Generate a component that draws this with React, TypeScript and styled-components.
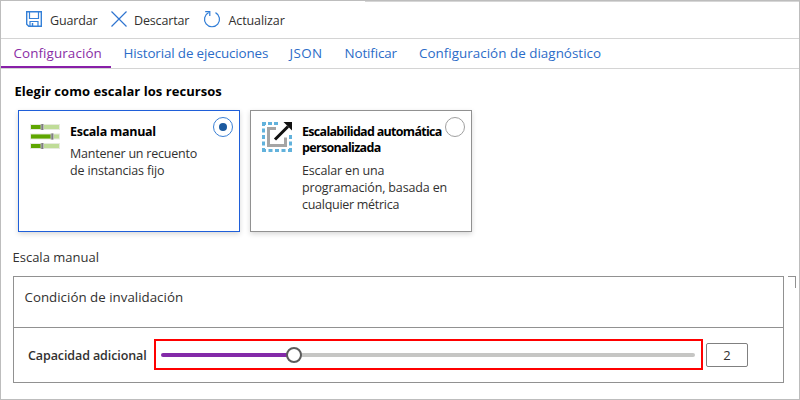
import React from "react";
import styled, { createGlobalStyle } from "styled-components";

const Global = createGlobalStyle`
  * { box-sizing: border-box; }
  body { margin: 0; background: #fff; font-family: "Open Sans", "Noto Sans", sans-serif; }
`;

const Frame = styled.div`
  width: 800px;
  height: 400px;
  border: 1px solid #bdbdbd;
  background: #fff;
  overflow: hidden;
  display: flex;
  flex-direction: column;
`;

const Label = styled.span<{ $size?: number; $track?: number; $weight?: number; $color?: string }>`
  display: block;
  font-size: ${(p) => p.$size ?? 13}px;
  letter-spacing: ${(p) => p.$track ?? 0}px;
  font-weight: ${(p) => p.$weight ?? 400};
  color: ${(p) => p.$color ?? "#323130"};
  white-space: nowrap;
`;

const TopRule = styled.div`
  height: 1px;
  margin-left: 364px;
  background: #d6d6d6;
  flex: none;
`;

const Toolbar = styled.div`
  height: 37px;
  flex: none;
  display: flex;
  border-bottom: 1px solid #d4d4d4;
  padding-left: 24px;
`;

const Command = styled.div<{ $width: number; $gap: number }>`
  width: ${(p) => p.$width}px;
  display: flex;
  align-items: flex-start;
  gap: ${(p) => p.$gap}px;
  padding-top: 9px;
  line-height: 20px;
  svg { flex: none; display: block; margin-top: -1px; }
`;

const Tabs = styled.div`
  height: 30px;
  flex: none;
  display: flex;
  border-bottom: 1px solid #d4d4d4;
`;

const Tab = styled.div<{ $width: number; $active?: boolean }>`
  width: ${(p) => p.$width}px;
  height: 29px;
  line-height: 28px;
  padding-left: 12.5px;
  border-bottom: ${(p) => (p.$active ? "2px solid #881fa8" : "0")};
`;

const Heading = styled.div`
  height: 41px;
  flex: none;
  padding: 12px 0 0 13.5px;
  line-height: 20px;
`;

const Cards = styled.div`
  display: flex;
  flex: none;
  gap: 10px;
  padding-left: 17px;
`;

const Card = styled.div<{ $selected?: boolean }>`
  width: 222px;
  height: 122px;
  border: 1px solid ${(p) => (p.$selected ? "#1f5fd9" : "#919191")};
  box-shadow: 0 2px 5px rgba(0, 0, 0, 0.16);
  position: relative;
  display: flex;
  padding: 11px 0 0 11px;
  svg { flex: none; display: block; }
`;

const CardText = styled.div`
  margin-left: 10px;
  padding-top: 2px;
  display: flex;
  flex-direction: column;
`;

const Title = styled.div`
  display: flex;
  flex-direction: column;
  line-height: 16px;
`;

const Description = styled.div<{ $gap: number }>`
  display: flex;
  flex-direction: column;
  line-height: 17px;
  margin-top: ${(p) => p.$gap}px;
`;

const Radio = styled.div<{ $checked?: boolean }>`
  position: absolute;
  top: 6px;
  right: 6px;
  width: 20px;
  height: 20px;
  border-radius: 50%;
  border: 1px solid ${(p) => (p.$checked ? "#3a7fd5" : "#a0a0a0")};
  background: #fff;
  display: grid;
  place-items: center;
  &::after {
    content: "";
    width: 8px;
    height: 8px;
    border-radius: 50%;
    background: ${(p) => (p.$checked ? "#1c5a9f" : "transparent")};
  }
`;

const SectionLabel = styled.div`
  height: 44px;
  flex: none;
  padding: 15px 0 0 11.5px;
  line-height: 20px;
`;

const PanelRow = styled.div`
  display: flex;
  gap: 4px;
  padding-left: 12px;
`;

const Panel = styled.div`
  width: 771px;
  height: 107px;
  border: 1px solid #919191;
`;

const PanelHead = styled.div`
  height: 51px;
  border-bottom: 1px solid #919191;
  padding: 10px 0 0 10.5px;
  line-height: 20px;
`;

const Capacity = styled.div`
  height: 54px;
  display: flex;
  align-items: flex-start;
  padding-left: 14px;
`;

const CapacityLabel = styled.div`
  width: 126px;
  margin-top: 18px;
  line-height: 20px;
`;

const SliderBox = styled.div`
  width: 549px;
  height: 31px;
  margin-top: 11px;
  border: 2px solid #f00;
  display: flex;
  align-items: center;
  padding: 1px 6px 0 5px;
`;

const Fill = styled.div`
  width: 126px;
  height: 4px;
  border-radius: 2px 0 0 2px;
  background: #832aa8;
`;

const Thumb = styled.div`
  width: 16px;
  height: 16px;
  margin: 0 -1px;
  border-radius: 50%;
  border: 2px solid #5c5c5c;
  background: #fff;
  z-index: 1;
`;

const Remaining = styled.div`
  flex: 1;
  height: 4px;
  border-radius: 0 2px 2px 0;
  background: #c6c6c4;
`;

const ValueBox = styled.div`
  width: 42px;
  height: 24px;
  margin: 15px 0 0 3px;
  border: 1px solid #808080;
  border-radius: 2px;
  display: grid;
  place-items: center;
  line-height: 22px;
`;

const Corner = styled.div`
  width: 8px;
  height: 12px;
  border-top: 1px solid #919191;
  border-right: 1px solid #919191;
`;

const SaveIcon = () => (
  <svg width="18" height="20" viewBox="0 0 18 20" fill="none" stroke="#3480d8">
    <path d="M1.700 1.700h14.600v14.600H3.800l-2.100-2.100z" strokeWidth="1.400" />
    <path d="M4.500 2v6.500h9V2M5 16v-4.500h8V16" strokeWidth="1.200" />
    <path d="M7.500 13v3" strokeWidth="1.500" />
  </svg>
);

const DiscardIcon = () => (
  <svg width="18" height="20" viewBox="0 0 18 20" fill="none" stroke="#2f74d0" strokeWidth="1.200">
    <path d="M1.500 1.500l15 15M16.500 1.500l-15 15" />
  </svg>
);

const RefreshIcon = () => (
  <svg width="18" height="20" viewBox="0 0 18 20" fill="none" stroke="#2f7cd6" strokeWidth="1.200">
    <path d="M12.500 2.600a7.500 7.500 0 1 1-6.800-.1" />
    <path d="M2.200 1.700h4.600v4.400" />
  </svg>
);

const ManualIcon = () => (
  <svg width="30" height="32" viewBox="0 0 30 32">
    {[[2, 10.5], [11.5, 20.5], [21, 10.5]].map(([y, x]) => (
      <g key={y}>
        <rect x="0" y={y} width="30" height="6" fill="#e6eadf" />
        <rect x="1" y={y + 1} width="28" height="4" fill="#bfdc98" />
        <rect x="1" y={y + 1} width={x} height="4" fill="#5ea600" />
        <rect x={x} y={y} width="3.500" height="6" fill="#bcbcbc" />
        <rect x={x + 1} y={y} width="1.400" height="6" fill="#777" />
      </g>
    ))}
  </svg>
);

const CustomIcon = () => (
  <svg width="30" height="32" viewBox="0 0 30 32" fill="none">
    <g fill="#62b2dc">
      <path d="M0 0h4v3H3v1H0zM6 0h4v3H6zM12 0h4v3h-4z" />
      <path d="M0 6.500h3v4H0zM0 13h3v4H0zM0 19.500h3v4H0zM0 26h3v1h1v3H0z" />
      <path d="M6.500 27h4v3h-4zM13 27h4v3h-4zM19.500 27h4v3h-4zM27 26h3v4h-4v-3h1zM27 13h3v4h-3zM27 19.500h3v4h-3z" />
    </g>
    <path d="M14 6.500H6.500v17h17V15.500" stroke="#a5a5a5" strokeWidth="3" />
    <path d="M13 17.500L26 4.500" stroke="#111" strokeWidth="3" />
    <path d="M21.500 0H30v8.500z" fill="#111" />
  </svg>
);

export default function App() {
  const blue = "#2b6cc8";
  return (
    <>
      <Global />
      <Frame>
        <TopRule />
        <Toolbar>
          <Command $width={85} $gap={7}><SaveIcon /><Label $size={12.5} $track={-0.15}>Guardar</Label></Command>
          <Command $width={93} $gap={6}><DiscardIcon /><Label $size={12.5} $track={-0.15}>Descartar</Label></Command>
          <Command $width={110} $gap={7.5}><RefreshIcon /><Label $size={12.5} $track={-0.1}>Actualizar</Label></Command>
        </Toolbar>
        <Tabs>
          <Tab $width={110} $active><Label $size={13.4} $track={0.1} $color="#8a2da5">Configuración</Label></Tab>
          <Tab $width={166}><Label $size={13.4} $track={-0.13} $color={blue}>Historial de ejecuciones</Label></Tab>
          <Tab $width={55}><Label $size={13.4} $track={0.4} $color={blue}>JSON</Label></Tab>
          <Tab $width={74.5}><Label $size={13.4} $track={-0.12} $color={blue}>Notificar</Label></Tab>
          <Tab $width={220}><Label $size={13.4} $track={0.03} $color={blue}>Configuración de diagnóstico</Label></Tab>
        </Tabs>
        <Heading><Label $weight={700} $track={0.05} $color="#000">Elegir como escalar los recursos</Label></Heading>
        <Cards>
          <Card $selected>
            <ManualIcon />
            <CardText>
              <Title><Label $size={12.5} $track={-0.27} $weight={700} $color="#000">Escala manual</Label></Title>
              <Description $gap={5}>
                <Label $size={12.5} $track={-0.22}>Mantener un recuento</Label>
                <Label $size={12.5} $track={-0.15}>de instancias fijo</Label>
              </Description>
            </CardText>
            <Radio $checked />
          </Card>
          <Card>
            <CustomIcon />
            <CardText>
              <Title>
                <Label $size={12.5} $track={-0.7} $weight={700} $color="#000">Escalabilidad automática</Label>
                <Label $size={12.5} $track={-0.68} $weight={700} $color="#000">personalizada</Label>
              </Title>
              <Description $gap={6}>
                <Label $size={12.5} $track={-0.15}>Escalar en una</Label>
                <Label $size={12.5} $track={-0.15}>programación, basada en</Label>
                <Label $size={12.5} $track={-0.28}>cualquier métrica</Label>
              </Description>
            </CardText>
            <Radio />
          </Card>
        </Cards>
        <SectionLabel><Label $track={0}>Escala manual</Label></SectionLabel>
        <PanelRow>
          <Panel>
            <PanelHead><Label $size={13.3} $track={0.02}>Condición de invalidación</Label></PanelHead>
            <Capacity>
              <CapacityLabel><Label $size={12.5} $track={-0.1} $weight={600}>Capacidad adicional</Label></CapacityLabel>
              <SliderBox><Fill /><Thumb /><Remaining /></SliderBox>
              <ValueBox><Label>2</Label></ValueBox>
            </Capacity>
          </Panel>
          <Corner />
        </PanelRow>
      </Frame>
    </>
  );
}
